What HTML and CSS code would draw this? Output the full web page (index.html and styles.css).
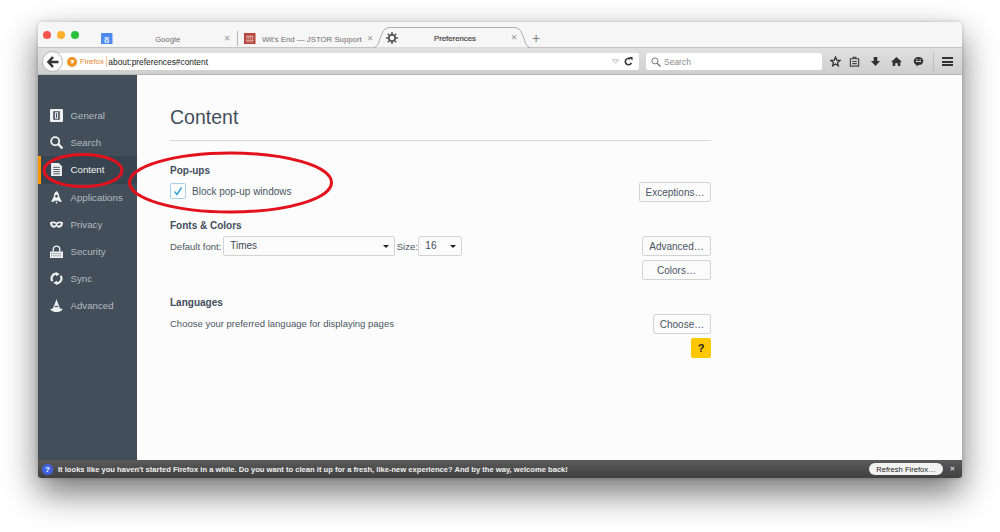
FILE: index.html
```html
<!DOCTYPE html>
<html lang="en">
<head>
<meta charset="utf-8">
<title>Preferences</title>
<link rel="stylesheet" href="styles.css">
</head>
<body>
<div class="window">
  <div class="tabstrip">
    <div class="lights"><i class="light red"></i><i class="light yellow"></i><i class="light green"></i></div>
    <div class="tab tab-google">
      <svg class="fav" viewBox="0 0 12 12"><rect width="12" height="12" rx="1" fill="#4d8af0"/><text x="6" y="10" text-anchor="middle" class="fav-g">8</text></svg>
      <span class="tab-title">Google</span><span class="tab-x">✕</span>
    </div>
    <div class="tab tab-jstor">
      <svg class="fav" viewBox="0 0 12 12"><rect width="12" height="12" fill="#b5443c"/><path d="M3 2v8M5 2v8M7 2v8M9 2v8M2 4h8M2 8h8" stroke="#e8c4b8" stroke-width=".7"/></svg>
      <span class="tab-title">Wit's End — JSTOR Support</span><span class="tab-x">✕</span>
    </div>
    <div class="tab tab-active">
      <svg class="tab-shape" viewBox="0 0 156 21" preserveAspectRatio="none"><path d="M0 20.5C7 20.500 5 1 15 .5H141C151 1 149 20.500 156 20.500" fill="#f6f6f6" stroke="#adadad"/></svg>
      <svg class="fav gear" viewBox="0 0 12 12"><circle cx="6" cy="6" r="3.200" fill="none" stroke="#5c5c5c" stroke-width="2"/><path d="M6 0v12M0 6h12M1.800 1.800l8.400 8.400M10.200 1.800l-8.400 8.400" stroke="#5c5c5c" stroke-width="1.600" stroke-dasharray="2 8"/></svg>
      <span class="tab-title strong">Preferences</span><span class="tab-x">✕</span>
    </div>
    <span class="newtab">+</span>
  </div>
  <div class="navbar">
    <div class="back"><svg viewBox="0 0 12 12" width="12" height="12"><path d="M6 1 1.500 6 6 11M2 6h9.500" fill="none" stroke="#333" stroke-width="2.500"/></svg></div>
    <div class="urlbar">
      <svg class="ff" viewBox="0 0 10 10" width="10" height="10"><circle cx="5" cy="5" r="5" fill="#f29423"/><path d="M3.500 3h3.500v1.500l-2 2.500-1-1 1.200-1.500H3.500z" fill="#fff"/></svg>
      <span class="identity">Firefox</span>
      <span class="url">about:preferences#content</span>
      <svg class="drop" viewBox="0 0 8 5" width="7" height="5"><path d="M.5.500h7L4 4.500z" fill="none" stroke="#b5b5b5"/></svg>
      <svg viewBox="0 0 10 10" width="9" height="9"><path d="M8.200 6.500A3.500 3.500 0 1 1 7 2.200" fill="none" stroke="#333" stroke-width="1.800"/><path d="M5.500 0 9.500 0V4z" fill="#333"/></svg>
    </div>
    <div class="searchbar">
      <svg viewBox="0 0 11 11" width="10" height="10"><circle cx="4.300" cy="4.300" r="3.300" fill="none" stroke="#777" stroke-width="1.100"/><path d="M6.800 6.800 10.500 10.500" stroke="#777" stroke-width="1.500"/></svg>
      <span>Search</span>
    </div>
    <div class="tools">
      <svg class="tool t-star" viewBox="0 0 12 12"><path d="M6 1.200 7.400 4.500 11 4.800 8.300 7.100 9.100 10.700 6 8.800 2.900 10.700 3.700 7.100 1 4.800 4.600 4.500z" fill="none" stroke="#333" stroke-width="1.400"/></svg>
      <svg class="tool t-clip" viewBox="0 0 12 12"><path d="M1.500 3h9v8h-9zM4.500 3V1.500h3V3M3.500 6h5M3.500 8.300h5" fill="none" stroke="#444" stroke-width="1.300"/></svg>
      <svg class="tool t-down" viewBox="0 0 12 12"><path d="M4 1h4v4.500h3L6 11 1 5.500h3z" fill="#333"/></svg>
      <svg class="tool t-home" viewBox="0 0 12 12"><path d="M6 1 12 6.500H10.200V11H7.400V7.800H4.600V11H1.800V6.500H0z" fill="#333"/></svg>
      <svg class="tool t-chat" viewBox="0 0 12 12"><path d="M6 1C2.800 1 .8 3 .8 5.500S2.500 9.600 4 9.800L3.500 11.500 6.300 9.900C9.300 9.900 11.200 8 11.200 5.500S9.200 1 6 1z" fill="#333"/><path d="M3 6h6" stroke="#ddd" stroke-width="1"/><circle cx="4.200" cy="4" r=".8" fill="#ddd"/><circle cx="7.800" cy="4" r=".8" fill="#ddd"/></svg>
      <i class="tool-sep"></i>
      <div class="burger"><i></i><i></i><i></i></div>
    </div>
  </div>
  <div class="body">
    <nav class="sidebar">
      <div class="cat"><svg viewBox="0 0 12 12"><path fill="#eef0f1" fill-rule="evenodd" d="M1 0h10a1 1 0 0 1 1 1v10a1 1 0 0 1-1 1H1a1 1 0 0 1-1-1V1a1 1 0 0 1 1-1zM3 2v8h6V2z"/><path fill="#eef0f1" fill-rule="evenodd" d="M4.500 3h3v6h-3zM5.500 4v4h1V4z"/></svg><span>General</span></div>
      <div class="cat"><svg viewBox="0 0 12 12"><circle cx="4.800" cy="4.800" r="3.700" fill="none" stroke="#eef0f1" stroke-width="1.700"/><path d="M7.500 7.500 11.500 11.500" stroke="#eef0f1" stroke-width="2.200"/></svg><span>Search</span></div>
      <div class="cat cat-on"><svg viewBox="0 0 12 12"><path fill="#eef0f1" d="M1 0h7l3 3v9H1z"/><path d="M3 4h6M3 6h6M3 8h6M3 10h6" stroke="#38444f" stroke-width=".8"/></svg><span>Content</span></div>
      <div class="cat"><svg viewBox="0 0 12 12"><path fill="#eef0f1" fill-rule="evenodd" d="M6 0C8 1.500 8.500 3.500 8.500 5L11 10H8.500L8 9H4L3.500 10H1L3.500 5C3.500 3.500 4 1.500 6 0zM6 3.500A1.200 1.200 0 1 0 6 6 1.200 1.200 0 1 0 6 3.500z"/><path fill="#eef0f1" d="M5 10h2L6 12z"/></svg><span>Applications</span></div>
      <div class="cat"><svg viewBox="0 0 12 12"><path fill="#eef0f1" fill-rule="evenodd" d="M0 4C2 2.800 4.500 3 6 4.200 7.500 3 10 2.800 12 4 12 7 10.500 9 8.500 9 7.200 9 6.500 8 6 7.500 5.500 8 4.800 9 3.500 9 1.500 9 0 7 0 4zM2 5c0 1.300 1 2 2 2s1.300-.7 1.300-1.500C4.500 4.900 3 4.600 2 5zM10 5c-1-.4-2.500-.1-3.300.5C6.700 6.300 7 7 8 7s2-.7 2-2z"/></svg><span>Privacy</span></div>
      <div class="cat"><svg viewBox="0 0 12 12"><path fill="none" stroke="#eef0f1" stroke-width="1.300" d="M3 6V4a3 3 0 0 1 6 0v2"/><path fill="#eef0f1" d="M0 6h12v6H0z"/><path d="M1 8h10M1 10h10" stroke="#38444f" stroke-width=".7" stroke-dasharray="1 1"/></svg><span>Security</span></div>
      <div class="cat"><svg viewBox="0 0 12 12"><path fill="none" stroke="#eef0f1" stroke-width="2" d="M2.200 8.500A4.500 4.500 0 0 1 6 1.500M9.800 3.500A4.500 4.500 0 0 1 6 10.500"/><path fill="#eef0f1" d="M5.500 0 9 2 5.500 4zM6.500 8 3 10 6.500 12z"/></svg><span>Sync</span></div>
      <div class="cat"><svg viewBox="0 0 12 12"><path fill="#eef0f1" d="M6 0 7 3 9.500 9H11.500C11.500 10.800 9 12 6 12S.5 10.800.5 9H2.500L5 3z"/><path d="M4.500 7.500C5 6.500 7 6.500 7.500 7.500" stroke="#38444f" fill="none"/></svg><span>Advanced</span></div>
    </nav>
    <main class="main">
      <div class="pane">
        <h1 class="title">Content</h1>
        <h2 class="heading h-popups">Pop-ups</h2>
        <div class="row row-popups">
          <div class="check"><svg viewBox="0 0 10 10" width="10" height="10"><path d="M1.500 5.500 4 8.500 8.500 1.500" fill="none" stroke="#2f9fe0" stroke-width="1.400"/></svg></div>
          <span class="check-label">Block pop-up windows</span>
          <button class="btn btn-exc">Exceptions…</button>
        </div>
        <h2 class="heading h-fonts">Fonts &amp; Colors</h2>
        <div class="row row-fonts">
          <span class="lbl">Default font:</span>
          <div class="select sel-font"><span>Times</span><i class="caret"></i></div>
          <span class="lbl">Size:</span>
          <div class="select sel-size"><span>16</span><i class="caret"></i></div>
          <button class="btn btn-adv">Advanced…</button>
        </div>
        <div class="row row-colors"><button class="btn btn-adv">Colors…</button></div>
        <h2 class="heading h-lang">Languages</h2>
        <div class="row row-lang">
          <span class="lbl lbl-lang">Choose your preferred language for displaying pages</span>
          <button class="btn btn-choose">Choose…</button>
        </div>
        <div class="row row-help"><div class="help">?</div></div>
      </div>
    </main>
  </div>
  <div class="notify">
    <span class="q">?</span>
    <span class="msg">It looks like you haven't started Firefox in a while. Do you want to clean it up for a fresh, like-new experience? And by the way, welcome back!</span>
    <button class="refresh">Refresh Firefox…</button>
    <span class="nx">✕</span>
  </div>
</div>
<svg class="marks" viewBox="0 0 1000 532" width="1000" height="532">
  <ellipse cx="83" cy="170.500" rx="39" ry="16" class="mark"/>
  <ellipse cx="230.500" cy="182.500" rx="101" ry="29.500" class="mark"/>
</svg>
</body>
</html>
```
FILE: styles.css
```css
* { box-sizing: border-box; }
html, body { margin: 0; height: 532px; overflow: hidden; }
body {
  background: #fff;
  padding: 22px 38px 54px;
  font-family: "Liberation Sans", Arial, sans-serif;
  position: relative;
}
.window {
  height: 456px;
  display: flex;
  flex-direction: column;
  border-radius: 4px 4px 3px 3px;
  overflow: hidden;
  background: #f6f6f6;
}
body::before {
  content: "";
  position: absolute;
  left: 38px; top: 22px;
  width: 924px; height: 456px;
  box-shadow: 0 15px 34px rgba(0,0,0,.55), 0 0 4px rgba(0,0,0,.2);
  border-radius: 4px;
  z-index: -1;
}
.tabstrip {
  height: 26px;
  display: flex;
  align-items: flex-end;
  background: #f6f6f6;
  border-bottom: 1px solid #c4c4c4;
  position: relative;
}
.lights { display: flex; gap: 6px; width: 60px; padding-left: 5px; align-self: flex-start; padding-top: 8.500px; }
.light { width: 8px; height: 8px; border-radius: 50%; display: block; }
.red { background: #f9544c; }
.yellow { background: #fbb02e; }
.green { background: #27c13c; }
.tab {
  height: 21px;
  display: flex;
  align-items: center;
  font-size: 7.800px;
  color: #6d6d6d;
  position: relative;
  flex: none;
}
.tab-google { width: 140px; padding-left: 3px; border-right: 1px solid #b5b5b5; height: 15px; margin-bottom: 1px; }
.tab-jstor { width: 136px; padding-left: 6px; height: 15px; margin-bottom: 1px; margin-left: 0; }
.tab-active { width: 156px; margin-left: 0; margin-bottom: -1px; padding-left: 12px; color: #444; z-index: 1; }
.tab-shape { position: absolute; inset: 0; width: 100%; height: 100%; }
.tab-active .tab-title { padding-top: 1px; padding-left: 2px; }
.tab-google .tab-title, .tab-jstor .tab-title { padding-top: 1px; }
.fav { width: 11.500px; height: 11.500px; flex: none; position: relative; }
.fav-g { font: 700 10px "Liberation Sans", sans-serif; fill: #dfe9fb; }
.gear { width: 12px; height: 12px; }
.tab-title { flex: 1; text-align: center; position: relative; white-space: nowrap; }
.strong { font-weight: 400; -webkit-text-stroke: .2px #444; }
.tab-google .tab-title { padding-right: 0; }
.tab-jstor .tab-title { text-align: left; padding-left: 6.500px; }
.tab-x { color: #9a9a9a; font-size: 8px; width: 8px; text-align: center; margin-right: 9px; position: relative; font-family: "DejaVu Sans", sans-serif; }
.tab-google .tab-x { margin-right: 6px; }
.tab-jstor .tab-x { margin-right: 0; }
.tab-active .tab-x { margin-right: 12px; }
.newtab { color: #808080; font-size: 14px; line-height: 18px; margin-left: 2px; }

.navbar {
  height: 27px;
  display: flex;
  align-items: center;
  background: linear-gradient(#e0e0e0, #cfcfcf);
  border-bottom: 1px solid #b8b8b8;
  padding: 1px 0 0 4px;
  gap: 4px;
}
.back {
  width: 21px; height: 21px;
  border-radius: 50%;
  background: #fbfbfb;
  border: 1px solid #b5b5b5;
  display: flex; align-items: center; justify-content: center;
  flex: none;
  position: relative;
  z-index: 1;
}
.urlbar {
  width: 580px;
  height: 17px;
  margin-left: -8px;
  padding: 0 6px 0 8px;
  background: #fff;
  border-radius: 0 2px 2px 0;
  display: flex;
  align-items: center;
  font-size: 8.400px;
  flex: none;
}
.ff { flex: none; margin-right: 3px; }
.identity { color: #e8842a; font-size: 7.800px; padding-right: 2px; margin-right: 1.500px; border-right: 1px solid #f0c9a0; line-height: 11px; }
.url { flex: 1; color: #222; }
.drop { margin-right: 5px; }
.searchbar {
  width: 176px;
  height: 17px;
  margin-left: 3px;
  background: #fff;
  border-radius: 2px;
  display: flex;
  align-items: center;
  gap: 3px;
  padding-left: 5px;
  font-size: 8.500px;
  color: #8a8a8a;
  flex: none;
}
.tools { flex: 1; display: flex; align-items: center; padding-left: 3.500px; }
.tool { width: 11px; height: 11px; flex: none; margin-right: 10px; }
.t-star { margin-right: 8px; }
.t-home { margin-right: 11px; }
.tool-sep { width: 1px; height: 20px; background: #c0c0c0; margin: 0 8px 0 -1px; }
.burger { width: 11px; display: flex; flex-direction: column; gap: 1.500px; }
.burger i { display: block; height: 2px; background: #333; }

.body { flex: 1; display: flex; min-height: 0; background: #fcfcfc; }
.sidebar {
  width: 99px;
  flex: none;
  background: #424e5a;
  padding-top: 27px;
}
.cat {
  height: 27.200px;
  display: flex;
  align-items: center;
  gap: 7.500px;
  padding-left: 12px;
  font-size: 9.700px;
  color: #b4bbc1;
}
.cat svg { width: 13px; height: 13px; flex: none; }
.cat-on { background: #38444f; color: #f3f4f5; border-left: 3px solid #ff9500; padding-left: 9px; }
.main { flex: 1; padding-left: 33px; }
.pane { width: 541px; }
.title {
  margin: 0;
  padding: 29px 0 10px;
  font-size: 19.500px;
  line-height: 26px;
  font-weight: 400;
  color: #424e5a;
  border-bottom: 1px solid #d8d8d8;
}
.heading { margin: 0; font-size: 10px; line-height: 12px; font-weight: 700; color: #424e5a; }
.h-popups { margin-top: 24px; }
.h-fonts { margin-top: 18px; }
.h-lang { margin-top: 17px; }
.row { display: flex; align-items: center; font-size: 9.500px; color: #4a5560; height: 20px; }
.row-popups { margin-top: 5px; }
.check {
  width: 16px; height: 16px;
  margin-bottom: 2px;
  border: 1px solid #a9d0ea;
  background: #fff;
  border-radius: 2px;
  display: flex; align-items: center; justify-content: center;
  flex: none;
}
.check-label { margin: 0 0 2px 6px; font-size: 10px; }
.btn {
  margin-left: auto;
  height: 20px;
  padding: 0;
  background: #fbfbfb;
  border: 1px solid #d3d3d3;
  border-radius: 2px;
  font: 10px "Liberation Sans", sans-serif;
  color: #4a5560;
  text-align: center;
}
.btn-exc { width: 72px; }
.btn-adv { width: 69px; }
.btn-choose { width: 58px; }
.row-fonts { margin-top: 4px; }
.lbl { white-space: nowrap; }
.lbl-lang { margin-bottom: 2px; }
.select {
  height: 20px;
  background: #fbfbfb;
  border: 1px solid #d3d3d3;
  border-radius: 2px;
  display: flex; align-items: center; justify-content: space-between;
  padding: 0 5px 0 6px;
  color: #3f4a55;
  flex: none;
  font-size: 10px;
}
.select span { margin-bottom: 1px; }
.sel-font { width: 172px; margin: 0 1.500px 0 2px; }
.sel-size { width: 44px; margin-left: 0.500px; }
.caret { width: 0; height: 0; border: 3px solid transparent; border-top: 3.500px solid #222; border-bottom: 0; }
.row-colors { margin-top: 4px; }
.row-lang { margin-top: 5px; }
.row-help { margin-top: 4px; justify-content: flex-end; }
.help {
  width: 20px; height: 20px;
  background: #ffc800;
  border-radius: 2px;
  font-size: 11px;
  font-weight: 700;
  color: #222;
  display: flex; align-items: center; justify-content: center;
}
.notify {
  height: 18px;
  flex: none;
  background: linear-gradient(#5a5a5a, #404040);
  display: flex;
  align-items: center;
  padding: 0 5px 0 4px;
  color: #f0f0f0;
  font-size: 7.600px;
  font-weight: 700;
}
.q {
  width: 11px; height: 11px;
  border-radius: 50%;
  background: #3f63e0;
  color: #fff;
  font-size: 8px;
  text-align: center;
  line-height: 11px;
  flex: none;
  margin-right: 5px;
}
.msg { flex: 1; white-space: nowrap; }
.refresh {
  width: 74px; height: 12px;
  border-radius: 6px;
  border: 0;
  padding: 0;
  background: #f2f2f2;
  font: 7.600px "Liberation Sans", sans-serif;
  color: #222;
  margin-right: 5px;
}
.nx { font-size: 7px; color: #eee; width: 9px; text-align: center; font-family: "DejaVu Sans", sans-serif; }
.marks { position: absolute; left: 0; top: 0; pointer-events: none; }
.mark { fill: none; stroke: #e3111c; stroke-width: 3; }
```
